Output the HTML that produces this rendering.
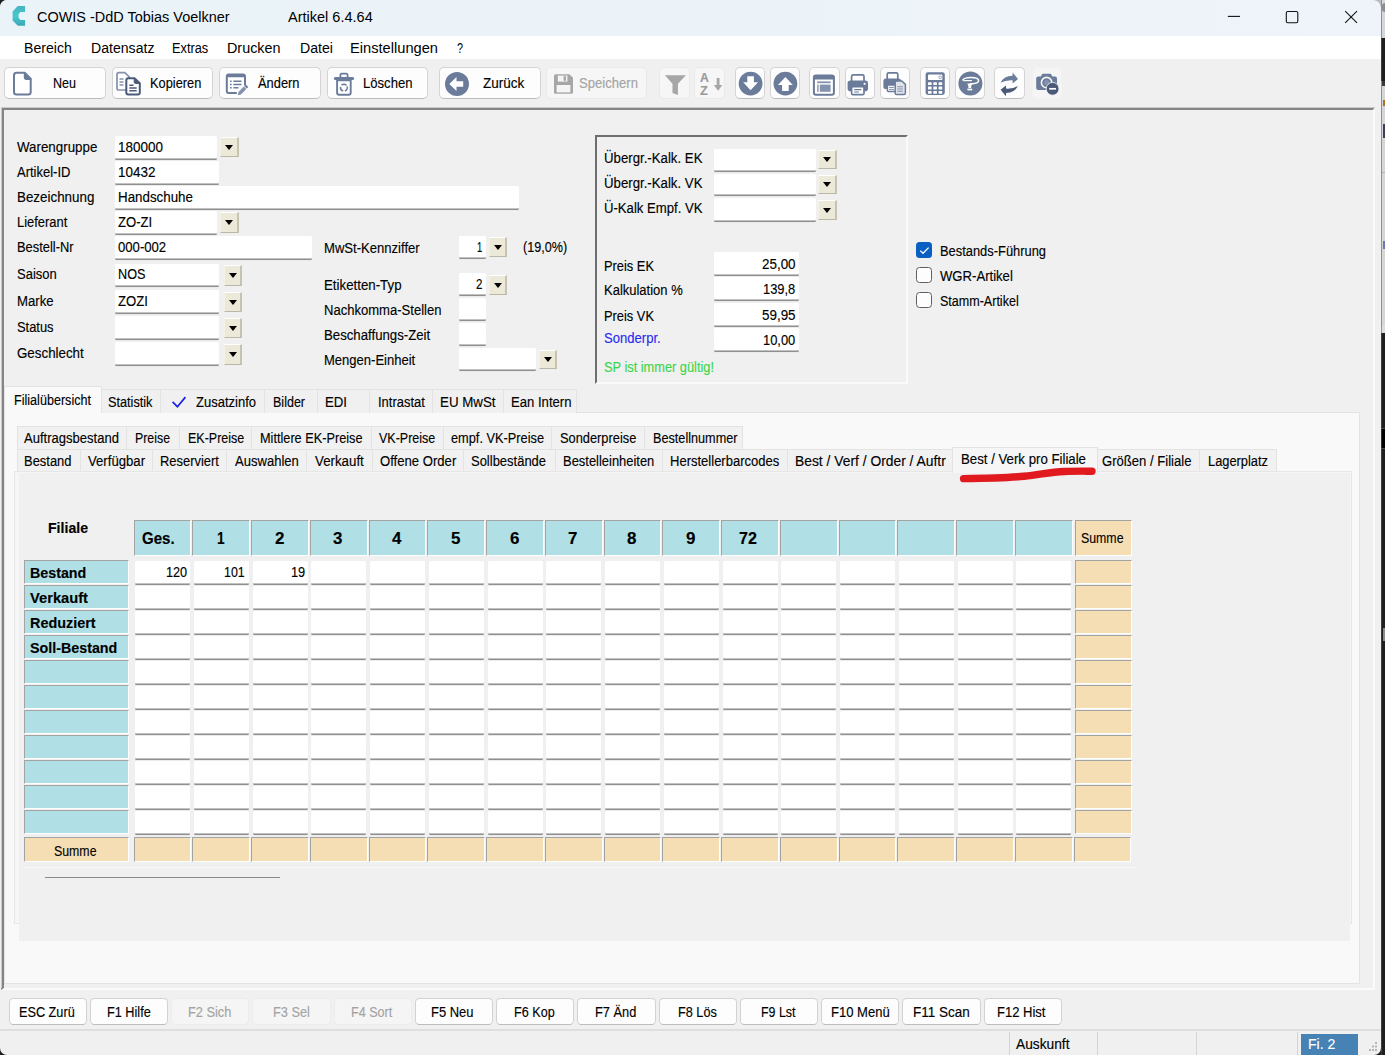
<!DOCTYPE html>
<html lang="de"><head><meta charset="utf-8"><title>COWIS - Artikel</title>
<style>
html,body{margin:0;padding:0}
body{width:1385px;height:1055px;position:relative;overflow:hidden;background:#1f1f1f;font-family:"Liberation Sans",sans-serif;color:#000}
body>div,.a{position:absolute;box-sizing:content-box}
.t{position:absolute;white-space:nowrap;line-height:1;transform-origin:0 0;display:block;-webkit-text-stroke:.15px currentColor}
.in{background:#fff;border-bottom:1px solid #8f8f8f;border-radius:1.500px;box-sizing:border-box !important;box-shadow:inset 0 -1px 0 #c2c2c2,0 1px 0 #ebebeb}
.dd{background:#ece9d8;border-top:1px solid #fff;border-left:1px solid #f4f2e8;border-right:2px solid #c6c3b2;border-bottom:1px solid #bab7a6;box-sizing:border-box !important}
.dd i{position:absolute;left:50%;top:50%;margin:-2.200px 0 0 -3.900px;width:0;height:0;border-left:4.700px solid transparent;border-right:4.700px solid transparent;border-top:5.600px solid #000}
.hc{border-top:1px solid #a3a3a3;border-left:1px solid #a3a3a3;border-right:1.500px solid #fff;border-bottom:1.500px solid #fff;box-sizing:border-box !important}
.b{box-sizing:content-box}
</style></head>
<body>
<div style="left:1381px;top:0px;width:4px;height:1055px;background:#1f1f1f"></div>
<div style="left:1381px;top:0px;width:4px;height:38px;background:#d4d6d8"></div>
<div style="left:1382px;top:3px;width:3px;height:9px;background:#8e8e8e;border-radius:3px 0 0 3px"></div>
<div style="left:1381px;top:80.5px;width:4px;height:244.5px;background:#d6d6d6"></div>
<div style="left:1381px;top:171.5px;width:4px;height:1px;background:#b4b4b4"></div>
<div style="left:1383px;top:241px;width:2px;height:8px;background:#6a78b0"></div>
<div style="left:1382px;top:81px;width:3px;height:5px;background:#3a3a3a"></div>
<div style="left:1382.5px;top:100px;width:2.5px;height:6px;background:#b0702a"></div>
<div style="left:1382.5px;top:124px;width:2.5px;height:14px;background:#3d3d58"></div>
<div style="left:1381px;top:325px;width:4px;height:8px;background:#dddddd"></div>
<div style="left:1381px;top:428px;width:4px;height:21px;background:#4a4a4a"></div>
<div style="left:1381px;top:429px;width:4px;height:19px;background:#000"></div>
<div style="left:1383px;top:628px;width:2px;height:13px;background:#8c8c8c"></div>
<div style="left:1381px;top:0px;width:1px;height:1055px;background:rgba(90,90,90,.55)"></div>
<div class="win" style="left:0px;top:0px;width:1381px;height:1055px;background:#f0f0f0;border-radius:7px;overflow:hidden"></div>
<div style="left:0px;top:0px;width:1381px;height:36px;background:linear-gradient(90deg,#eaf3f7,#ecf3f8 55%,#eff3fa);border-radius:7px 7px 0 0"></div>
<svg class="a" style="left:10px;top:4px" width="18" height="24" viewBox="10 4 18 24"><defs><linearGradient id="cg" x1="0" y1="0" x2="0" y2="1"><stop offset="0" stop-color="#48b3be"/><stop offset=".5" stop-color="#46c9d1"/><stop offset="1" stop-color="#3ba7b3"/></linearGradient></defs><path d="M17.800 6.100H25.100V11.900H20.600L18.600 14V17.900L20.600 19.900H25.100V25.800H17.800L12.600 20.500V11.500Z" fill="url(#cg)"/></svg>
<span class="t" style="left:37.40px;top:9.00px;font-size:15.5px;transform:scaleX(0.9329);-webkit-text-stroke:0;">COWIS -DdD Tobias Voelkner</span>
<span class="t" style="left:288.30px;top:9.00px;font-size:15.5px;transform:scaleX(0.9365);-webkit-text-stroke:0;">Artikel 6.4.64</span>
<svg class="a" style="left:1220px;top:5px" width="150" height="26" viewBox="0 0 150 26"><g stroke="#111" stroke-width="1.1" fill="none"><path d="M7.8 11.4H20"/><rect x="66.3" y="6.5" width="11.5" height="11.2" rx="1.5"/><path d="M125.2 6.2L137 17.8M137 6.2L125.2 17.8"/></g></svg>
<div style="left:0px;top:36px;width:1381px;height:22.6px;background:#fff"></div>
<span class="t" style="left:24.20px;top:40.00px;font-size:15.5px;transform:scaleX(0.9097);-webkit-text-stroke:0;">Bereich</span>
<span class="t" style="left:90.50px;top:40.00px;font-size:15.5px;transform:scaleX(0.9094);-webkit-text-stroke:0;">Datensatz</span>
<span class="t" style="left:172.00px;top:40.00px;font-size:15.5px;transform:scaleX(0.8238);-webkit-text-stroke:0;">Extras</span>
<span class="t" style="left:227.00px;top:40.00px;font-size:15.5px;transform:scaleX(0.9266);-webkit-text-stroke:0;">Drucken</span>
<span class="t" style="left:299.50px;top:40.00px;font-size:15.5px;transform:scaleX(0.9118);-webkit-text-stroke:0;">Datei</span>
<span class="t" style="left:350.00px;top:40.00px;font-size:15.5px;transform:scaleX(0.9454);-webkit-text-stroke:0;">Einstellungen</span>
<span class="t" style="left:456.50px;top:40.00px;font-size:15.5px;transform:scaleX(0.6975);-webkit-text-stroke:0;">?</span>
<div class="b" style="left:4px;top:67px;width:99.5px;height:30px;background:#fdfdfd;border:1px solid #d4d4d4;border-bottom-color:#bcbcbc;border-radius:5px"></div>
<div class="b" style="left:111.6px;top:67px;width:99.4px;height:30px;background:#fdfdfd;border:1px solid #d4d4d4;border-bottom-color:#bcbcbc;border-radius:5px"></div>
<div class="b" style="left:219.2px;top:67px;width:99.5px;height:30px;background:#fdfdfd;border:1px solid #d4d4d4;border-bottom-color:#bcbcbc;border-radius:5px"></div>
<div class="b" style="left:326.8px;top:67px;width:99.3px;height:30px;background:#fdfdfd;border:1px solid #d4d4d4;border-bottom-color:#bcbcbc;border-radius:5px"></div>
<div class="b" style="left:439px;top:67px;width:99.6px;height:30px;background:#fdfdfd;border:1px solid #d4d4d4;border-bottom-color:#bcbcbc;border-radius:5px"></div>
<div class="b" style="left:545.6px;top:67px;width:99px;height:30px;background:#f6f6f6;border:1px solid #eaeaea;border-radius:5px"></div>
<span class="t" style="left:53.00px;top:75.00px;font-size:15.5px;transform:scaleX(0.8086);">Neu</span>
<span class="t" style="left:150.00px;top:75.00px;font-size:15.5px;transform:scaleX(0.8264);">Kopieren</span>
<span class="t" style="left:257.50px;top:75.00px;font-size:15.5px;transform:scaleX(0.8302);">Ändern</span>
<span class="t" style="left:363.00px;top:75.00px;font-size:15.5px;transform:scaleX(0.8449);">Löschen</span>
<span class="t" style="left:482.50px;top:75.00px;font-size:15.5px;transform:scaleX(0.8708);">Zurück</span>
<span class="t" style="left:579.00px;top:75.00px;font-size:15.5px;transform:scaleX(0.8449);color:#a3a3a3;">Speichern</span>
<div class="b" style="left:659.3px;top:67px;width:29.2px;height:30px;background:#f6f6f6;border:1px solid #eaeaea;border-radius:5px"></div>
<div class="b" style="left:694.3px;top:67px;width:29.2px;height:30px;background:#f6f6f6;border:1px solid #eaeaea;border-radius:5px"></div>
<div class="b" style="left:734.6px;top:67px;width:28.7px;height:30px;background:#fdfdfd;border:1px solid #d4d4d4;border-bottom-color:#bcbcbc;border-radius:5px"></div>
<div class="b" style="left:769.6px;top:67px;width:28.7px;height:30px;background:#fdfdfd;border:1px solid #d4d4d4;border-bottom-color:#bcbcbc;border-radius:5px"></div>
<div class="b" style="left:809.3px;top:67px;width:28.7px;height:30px;background:#fdfdfd;border:1px solid #d4d4d4;border-bottom-color:#bcbcbc;border-radius:5px"></div>
<div class="b" style="left:844.5px;top:67px;width:28.7px;height:30px;background:#fdfdfd;border:1px solid #d4d4d4;border-bottom-color:#bcbcbc;border-radius:5px"></div>
<div class="b" style="left:879.6px;top:67px;width:28.7px;height:30px;background:#fdfdfd;border:1px solid #d4d4d4;border-bottom-color:#bcbcbc;border-radius:5px"></div>
<div class="b" style="left:919.5px;top:67px;width:28.7px;height:30px;background:#fdfdfd;border:1px solid #d4d4d4;border-bottom-color:#bcbcbc;border-radius:5px"></div>
<div class="b" style="left:954.6px;top:67px;width:28.7px;height:30px;background:#fdfdfd;border:1px solid #d4d4d4;border-bottom-color:#bcbcbc;border-radius:5px"></div>
<div class="b" style="left:994.4px;top:67px;width:28.7px;height:30px;background:#fdfdfd;border:1px solid #d4d4d4;border-bottom-color:#bcbcbc;border-radius:5px"></div>
<div class="b" style="left:1032.3px;top:67px;width:28px;height:30px;background:#f5f5f5;border:1px solid #f2f2f2;border-radius:5px"></div>
<span class="t" style="left:699.60px;top:72.00px;font-size:12.8px;transform:scaleX(0.9549);font-weight:700;color:#999;">A</span>
<span class="t" style="left:700.00px;top:85.00px;font-size:12.8px;transform:scaleX(0.9990);font-weight:700;color:#999;">Z</span>
<svg class="a" style="left:0;top:60px" width="1381" height="45" viewBox="0 60 1381 45"><path d="M16.5 72.8h8.2l6 6v13.2q0 2.5-2.5 2.5h-11.7q-2.5 0-2.5-2.5v-16.7q0-2.5 2.5-2.5z" fill="#fff" stroke="#6b7b9a" stroke-width="2" stroke-linejoin="round"/><path d="M24.400 72.800v4.500q0 2 2 2h4.500z" fill="#6b7b9a" stroke="#6b7b9a" stroke-width="1.200" stroke-linejoin="round"/><path d="M118.8 72.6h6l4.6 4.4v11.2q0 1.8-1.8 1.8h-8.8q-1.8 0-1.8-1.8v-13.8q0-1.8 1.8-1.8z" fill="#fff" stroke="#8492ae" stroke-width="1.7"/><path d="M119.5 79h4M119.5 82h4M119.5 85h4" stroke="#8492ae" stroke-width="1.3"/><path d="M128.3 78.2h6.2l5.3 5v9.2q0 2-2 2h-9.5q-2 0-2-2v-12.2q0-2 2-2z" fill="#fff" stroke="#4c5a7a" stroke-width="2"/><path d="M134.200 78.400v3.600q0 1.500 1.500 1.500h4.200z" fill="#4c5a7a" stroke="#4c5a7a" stroke-width="1" stroke-linejoin="round"/><path d="M129.3 85.2h4.2M129.3 88h7.4M129.3 90.8h7.4" stroke="#4c5a7a" stroke-width="1.5"/><path d="M245 85.500v-9q0-2-2-2h-14.200q-2 0-2 2v14.400q0 2 2 2h8" fill="none" stroke="#6b7b9a" stroke-width="2"/><rect x="226.800" y="74" width="18.200" height="3.200" rx="1.200" fill="#6b7b9a"/><path d="M230 81.300h1.600M233.400 81.300h8M230 84.500h1.600M233.400 84.500h8M230 87.700h1.600M233.400 87.700h5" stroke="#6b7b9a" stroke-width="1.500"/><path d="M237.600 95.300l.9-3.400 5.300-5.300 2.500 2.500-5.300 5.300z" fill="#8492ae"/><path d="M244.300 86.100l.9-.9q.7-.6 1.400 0l1.100 1.100q.6.700 0 1.400l-.9.900z" fill="#6b7b9a"/><path d="M337.100 80.200h13.600v12.600q0 2-2 2h-9.600q-2 0-2-2z" fill="#fff" stroke="#6b7b9a" stroke-width="1.900"/><path d="M335.400 78.600h17.200" stroke="#6b7b9a" stroke-width="3" stroke-linecap="round"/><path d="M340.400 77.500v-2.400q0-1.500 1.500-1.500h4.200q1.500 0 1.500 1.500v2.400" fill="none" stroke="#6b7b9a" stroke-width="1.800"/><circle cx="343.900" cy="87.700" r="3.400" fill="none" stroke="#6b7b9a" stroke-width="1.600" stroke-dasharray="5.300 1.820" transform="rotate(-20 343.900 87.700)"/><circle cx="457" cy="84" r="12" fill="#6b7b9a"/><path d="M449.3 84l7.2-7v4.3h6.7v5.4h-6.7v4.3z" fill="#fff"/><path d="M555.6 74.2h13.8l3.6 3.6v14.4q0 1.6-1.6 1.6h-15.8q-1.6 0-1.6-1.6v-16.4q0-1.6 1.6-1.6z" fill="#a6a6a6"/><rect x="557.8" y="75.6" width="9.6" height="6" fill="#f4f4f4"/><rect x="563.6" y="76.2" width="2.4" height="4.6" fill="#a6a6a6"/><rect x="556.6" y="85" width="13.8" height="7.4" fill="#f4f4f4"/><path d="M664.9 75.2h21l-8 8.6v11.2l-5.4-2v-9.2z" fill="#a6a6a6"/><path d="M716.700 78h2.800v7h2.900l-4.300 5.800-4.300-5.800h2.900z" fill="#a6a6a6"/><circle cx="750.6" cy="83.6" r="11.9" fill="#6b7b9a"/><path d="M747.3 76.2h6.6v6h4.1l-7.4 8-7.4-8h4.1z" fill="#fff"/><circle cx="785.4" cy="83.6" r="11.9" fill="#6b7b9a"/><path d="M782.1 91h6.6v-6h4.1l-7.4-8-7.4 8h4.1z" fill="#fff"/><rect x="813.9" y="75.6" width="20" height="19.2" rx="2" fill="#fff" stroke="#6b7b9a" stroke-width="2"/><rect x="813.5" y="75" width="20.8" height="4.6" rx="1.5" fill="#6b7b9a"/><rect x="817.2" y="81.4" width="13.4" height="1.8" fill="#8492ae"/><rect x="817.2" y="84.6" width="1.4" height="7.2" fill="#8492ae"/><rect x="819.8" y="84.6" width="10.8" height="7.2" fill="#8492ae"/><path d="M851.6 80.9v-4.4q0-1.6 1.6-1.6h9.2q1.6 0 1.6 1.6v4.4" fill="#fff" stroke="#6b7b9a" stroke-width="1.7"/><rect x="847.6" y="80.4" width="20.4" height="10.8" rx="2.8" fill="#6b7b9a"/><circle cx="864.6" cy="83.80000000000001" r="1.1" fill="#fff"/><rect x="851.6" y="86.60000000000001" width="12.4" height="8" rx="1.4" fill="#fff" stroke="#6b7b9a" stroke-width="1.7"/><path d="M854.2 89.60000000000001h7.2M854.2 92.0h4.6" stroke="#6b7b9a" stroke-width="1.2"/><path d="M887.2 79v-4.6q0-1.5 1.5-1.5h7.6q1.5 0 1.5 1.5v4.6" fill="#fff" stroke="#6b7b9a" stroke-width="1.7"/><rect x="883.4" y="78.4" width="17.6" height="10.6" rx="2.6" fill="#6b7b9a"/><rect x="887.4" y="85" width="9" height="6.6" rx="1" fill="#fff" stroke="#6b7b9a" stroke-width="1.5"/><path d="M889 87.4h5M889 89.4h5" stroke="#8492ae" stroke-width="1"/><path d="M896.6 81h5.2l3.6 3.4v8.8q0 1.4-1.4 1.4h-7.4q-1.4 0-1.4-1.4v-10.800q0-1.4 1.4-1.400z" fill="#dfe3ea" stroke="#6b7b9a" stroke-width="1.5"/><path d="M897.3 86.800h5.600M897.3 89h5.600M897.3 91.200h5.600" stroke="#8492ae" stroke-width="1.1"/><rect x="925.6" y="72.2" width="19.2" height="22.8" rx="2.4" fill="#6b7b9a"/><rect x="928" y="74.6" width="14.4" height="5.4" rx=".8" fill="#fff"/><circle cx="940.2" cy="77.3" r="1.4" fill="none" stroke="#8492ae" stroke-width=".8"/><rect x="928.0" y="82.3" width="3.6" height="2.8" rx=".5" fill="#fff"/><rect x="933.3" y="82.3" width="3.6" height="2.8" rx=".5" fill="#fff"/><rect x="938.6" y="82.3" width="3.6" height="2.8" rx=".5" fill="#fff"/><rect x="928.0" y="86.6" width="3.6" height="2.8" rx=".5" fill="#fff"/><rect x="933.3" y="86.6" width="3.6" height="2.8" rx=".5" fill="#fff"/><rect x="938.6" y="86.6" width="3.6" height="2.8" rx=".5" fill="#fff"/><rect x="928.0" y="90.9" width="3.6" height="2.8" rx=".5" fill="#fff"/><rect x="933.3" y="90.9" width="3.6" height="2.8" rx=".5" fill="#fff"/><rect x="938.6" y="90.9" width="3.6" height="2.8" rx=".5" fill="#fff"/><circle cx="970.4" cy="83.600" r="12" fill="#6b7b9a"/><path d="M962.600 80.400q1-3 8.400-3 7.600 0 7.600 3.200 0 2.900-6.200 3.100l-2.300.1" fill="none" stroke="#fff" stroke-width="1.500"/><path d="M963.400 80.600h8.600" stroke="#fff" stroke-width="1.200"/><path d="M967.300 83.400h5l-1.100 2.600v2h-2.800v-2z" fill="#fff"/><rect x="967.400" y="88.600" width="4.800" height="1.800" fill="#fff"/><path d="M1000.600 82.800Q1003.600 76 1012.600 75.800L1012.600 72.600L1018 79L1012.600 83.400L1012.600 80.200Q1005.500 79.800 1000.600 82.800Z" fill="#6b7b9a"/><path d="M1017.800 86Q1014.800 92.800 1006 93L1006 96.200L1000.600 89.800L1006 85.400L1006 88.600Q1013.100 89 1017.800 86Z" fill="#4c5a7a"/><path d="M1036.200 78.400q0-2 2-2h2.600l1.600-2.600h8.400l1.600 2.600h2.600q2 0 2 2v9.600q0 2-2 2h-16.800q-2 0-2-2z" fill="#6b7b9a"/><circle cx="1046.600" cy="82.600" r="5.200" fill="none" stroke="#f5f5f5" stroke-width="1.600"/><circle cx="1046.600" cy="82.600" r="2.600" fill="#8492ae"/><circle cx="1052.600" cy="88.800" r="6.400" fill="#4c5a7a" stroke="#f5f5f5" stroke-width=".8"/><path d="M1049.200 88.800h6.800" stroke="#fff" stroke-width="1.700"/></svg>
<div style="left:1px;top:107px;width:1374px;height:883px;border-top:3px solid #858585;border-left:3px solid #858585;border-right:2px solid #fbfbfb;border-bottom:2px solid #fbfbfb;box-sizing:border-box"></div>
<div style="left:1px;top:107px;width:1374px;height:1px;background:#c9c9c9"></div>
<div style="left:1px;top:108px;width:1px;height:880px;background:#c9c9c9"></div>
<span class="t" style="left:17.20px;top:139.00px;font-size:15.5px;transform:scaleX(0.8606);">Warengruppe</span>
<span class="t" style="left:17.20px;top:164.00px;font-size:15.5px;transform:scaleX(0.8382);">Artikel-ID</span>
<span class="t" style="left:17.20px;top:189.00px;font-size:15.5px;transform:scaleX(0.8628);">Bezeichnung</span>
<span class="t" style="left:17.20px;top:214.00px;font-size:15.5px;transform:scaleX(0.8342);">Lieferant</span>
<span class="t" style="left:17.20px;top:239.00px;font-size:15.5px;transform:scaleX(0.8311);">Bestell-Nr</span>
<span class="t" style="left:17.20px;top:266.00px;font-size:15.5px;transform:scaleX(0.8391);">Saison</span>
<span class="t" style="left:17.20px;top:293.00px;font-size:15.5px;transform:scaleX(0.8482);">Marke</span>
<span class="t" style="left:17.20px;top:319.00px;font-size:15.5px;transform:scaleX(0.8318);">Status</span>
<span class="t" style="left:17.00px;top:345.00px;font-size:15.5px;transform:scaleX(0.8604);">Geschlecht</span>
<div class="in" style="left:115px;top:135.6px;width:102px;height:24px;"></div>
<div class="dd" style="left:220px;top:136.5px;width:18.8px;height:20.5px;"><i></i></div>
<div class="in" style="left:115px;top:161px;width:103.5px;height:23.6px;"></div>
<div class="in" style="left:115px;top:186px;width:403.8px;height:23.6px;"></div>
<div class="in" style="left:115px;top:211px;width:102px;height:23.6px;"></div>
<div class="dd" style="left:220px;top:212px;width:18.8px;height:20.5px;"><i></i></div>
<div class="in" style="left:115px;top:236px;width:197px;height:23.6px;"></div>
<div class="in" style="left:115px;top:264px;width:103.5px;height:23.4px;"></div>
<div class="dd" style="left:223.8px;top:265.3px;width:18.4px;height:20.4px;"><i></i></div>
<div class="in" style="left:115px;top:290px;width:103.5px;height:23.5px;"></div>
<div class="dd" style="left:223.8px;top:291.7px;width:18.4px;height:20.3px;"><i></i></div>
<div class="in" style="left:115px;top:316px;width:103.5px;height:23.6px;"></div>
<div class="dd" style="left:223.8px;top:318px;width:18.4px;height:20.2px;"><i></i></div>
<div class="in" style="left:115px;top:342.4px;width:103.5px;height:23.3px;"></div>
<div class="dd" style="left:223.8px;top:344.4px;width:18.4px;height:20.2px;"><i></i></div>
<span class="t" style="left:117.60px;top:139.00px;font-size:15.5px;transform:scaleX(0.8686);">180000</span>
<span class="t" style="left:117.60px;top:164.00px;font-size:15.5px;transform:scaleX(0.8680);">10432</span>
<span class="t" style="left:117.60px;top:189.00px;font-size:15.5px;transform:scaleX(0.8606);">Handschuhe</span>
<span class="t" style="left:117.60px;top:214.00px;font-size:15.5px;transform:scaleX(0.8441);">ZO-ZI</span>
<span class="t" style="left:117.60px;top:239.00px;font-size:15.5px;transform:scaleX(0.8464);">000-002</span>
<span class="t" style="left:117.60px;top:266.00px;font-size:15.5px;transform:scaleX(0.8165);">NOS</span>
<span class="t" style="left:117.60px;top:293.00px;font-size:15.5px;transform:scaleX(0.8479);">ZOZI</span>
<span class="t" style="left:323.80px;top:240.00px;font-size:15.5px;transform:scaleX(0.8435);">MwSt-Kennziffer</span>
<span class="t" style="left:323.80px;top:277.00px;font-size:15.5px;transform:scaleX(0.8569);">Etiketten-Typ</span>
<span class="t" style="left:323.80px;top:302.00px;font-size:15.5px;transform:scaleX(0.8418);">Nachkomma-Stellen</span>
<span class="t" style="left:323.80px;top:327.00px;font-size:15.5px;transform:scaleX(0.8522);">Beschaffungs-Zeit</span>
<span class="t" style="left:323.80px;top:352.00px;font-size:15.5px;transform:scaleX(0.8400);">Mengen-Einheit</span>
<div class="in" style="left:458.8px;top:235.5px;width:27px;height:23.9px;"></div>
<div class="dd" style="left:488.8px;top:237px;width:18.2px;height:20px;"><i></i></div>
<span class="t" style="left:477.40px;top:239.00px;font-size:15.5px;transform:scaleX(0.6045);">1</span>
<span class="t" style="left:523.40px;top:239.00px;font-size:15.5px;transform:scaleX(0.8129);">(19,0%)</span>
<div class="in" style="left:458.8px;top:273px;width:27px;height:23px;"></div>
<div class="dd" style="left:488.8px;top:275px;width:18.2px;height:19.5px;"><i></i></div>
<span class="t" style="left:476.40px;top:276.00px;font-size:15.5px;transform:scaleX(0.7440);">2</span>
<div class="in" style="left:458.8px;top:297.6px;width:27px;height:23.6px;"></div>
<div class="in" style="left:458.8px;top:322.6px;width:27px;height:23.8px;"></div>
<div class="in" style="left:458.8px;top:347.6px;width:77px;height:23.8px;"></div>
<div class="dd" style="left:538.8px;top:349.5px;width:18.2px;height:19.5px;"><i></i></div>
<div style="left:595.4px;top:135px;width:313px;height:249px;border-top:2.500px solid #6e6e6e;border-left:2.500px solid #6e6e6e;border-right:2px solid #fafafa;border-bottom:2px solid #fafafa;box-sizing:border-box"></div>
<span class="t" style="left:603.80px;top:150.00px;font-size:15.5px;transform:scaleX(0.8530);">Übergr.-Kalk. EK</span>
<span class="t" style="left:603.80px;top:175.00px;font-size:15.5px;transform:scaleX(0.8530);">Übergr.-Kalk. VK</span>
<span class="t" style="left:603.80px;top:200.00px;font-size:15.5px;transform:scaleX(0.8473);">Ü-Kalk Empf. VK</span>
<div class="in" style="left:713.8px;top:148.6px;width:102px;height:23.4px;"></div>
<div class="dd" style="left:818.3px;top:150px;width:18.7px;height:19px;"><i></i></div>
<div class="in" style="left:713.8px;top:173.6px;width:102px;height:22.8px;"></div>
<div class="dd" style="left:818.3px;top:175px;width:18.7px;height:19.3px;"><i></i></div>
<div class="in" style="left:713.8px;top:198.4px;width:102px;height:23.2px;"></div>
<div class="dd" style="left:818.3px;top:200px;width:18.7px;height:19.6px;"><i></i></div>
<span class="t" style="left:603.80px;top:258.00px;font-size:15.5px;transform:scaleX(0.8293);">Preis EK</span>
<span class="t" style="left:603.80px;top:282.00px;font-size:15.5px;transform:scaleX(0.8379);">Kalkulation %</span>
<span class="t" style="left:603.80px;top:308.00px;font-size:15.5px;transform:scaleX(0.8293);">Preis VK</span>
<span class="t" style="left:603.80px;top:330.00px;font-size:15.5px;transform:scaleX(0.8438);color:#2a2af0;">Sonderpr.</span>
<span class="t" style="left:603.80px;top:359.00px;font-size:15.5px;transform:scaleX(0.8257);color:#3bd64a;">SP ist immer gültig!</span>
<div class="in" style="left:713.8px;top:251.8px;width:85px;height:23.8px;"></div>
<div class="in" style="left:713.8px;top:277.4px;width:85px;height:24px;"></div>
<div class="in" style="left:713.8px;top:302.6px;width:85px;height:24.2px;"></div>
<div class="in" style="left:713.8px;top:328px;width:85px;height:24px;"></div>
<span class="t" style="left:762.00px;top:256.00px;font-size:15.5px;transform:scaleX(0.8654);">25,00</span>
<span class="t" style="left:763.30px;top:281.00px;font-size:15.5px;transform:scaleX(0.8319);">139,8</span>
<span class="t" style="left:762.00px;top:307.00px;font-size:15.5px;transform:scaleX(0.8654);">59,95</span>
<span class="t" style="left:763.30px;top:332.00px;font-size:15.5px;transform:scaleX(0.8319);">10,00</span>
<div style="left:916px;top:242px;width:16.4px;height:16.4px;background:#0b5fc2;border-radius:3.500px"></div>
<svg class="a" style="left:916px;top:242px" width="17" height="17" viewBox="0 0 17 17"><path d="M4.300 8.600l2.700 2.700 5.600-5.700" fill="none" stroke="#fff" stroke-width="1.300"/></svg>
<div style="left:916px;top:267px;width:16.4px;height:16.4px;background:#fdfdfd;border:1.500px solid #5f5f5f;border-radius:3.500px;box-sizing:border-box"></div>
<div style="left:916px;top:292px;width:16.4px;height:16.4px;background:#fdfdfd;border:1.500px solid #5f5f5f;border-radius:3.500px;box-sizing:border-box"></div>
<span class="t" style="left:940.00px;top:243.00px;font-size:15.5px;transform:scaleX(0.8315);">Bestands-Führung</span>
<span class="t" style="left:940.00px;top:268.00px;font-size:15.5px;transform:scaleX(0.8455);">WGR-Artikel</span>
<span class="t" style="left:940.00px;top:293.00px;font-size:15.5px;transform:scaleX(0.8085);">Stamm-Artikel</span>
<div style="left:4px;top:412.4px;width:1356px;height:571.6px;background:#f9f9f9;border:1px solid #e3e3e3;box-sizing:border-box"></div>
<div style="left:101.3px;top:389px;width:59.7px;height:24px;border:1px solid #e3e3e3;border-bottom:none;box-sizing:border-box;background:#f0f0f0"></div>
<span class="t" style="left:107.50px;top:394.00px;font-size:15.5px;transform:scaleX(0.8191);">Statistik</span>
<div style="left:160px;top:389px;width:105.3px;height:24px;border:1px solid #e3e3e3;border-bottom:none;box-sizing:border-box;background:#f0f0f0"></div>
<span class="t" style="left:196.30px;top:394.00px;font-size:15.5px;transform:scaleX(0.8388);">Zusatzinfo</span>
<div style="left:264.3px;top:389px;width:53.7px;height:24px;border:1px solid #e3e3e3;border-bottom:none;box-sizing:border-box;background:#f0f0f0"></div>
<span class="t" style="left:272.50px;top:394.00px;font-size:15.5px;transform:scaleX(0.8080);">Bilder</span>
<div style="left:317px;top:389px;width:53.3px;height:24px;border:1px solid #e3e3e3;border-bottom:none;box-sizing:border-box;background:#f0f0f0"></div>
<span class="t" style="left:325.00px;top:394.00px;font-size:15.5px;transform:scaleX(0.8525);">EDI</span>
<div style="left:369.3px;top:389px;width:63.5px;height:24px;border:1px solid #e3e3e3;border-bottom:none;box-sizing:border-box;background:#f0f0f0"></div>
<span class="t" style="left:377.50px;top:394.00px;font-size:15.5px;transform:scaleX(0.8352);">Intrastat</span>
<div style="left:431.8px;top:389px;width:72.2px;height:24px;border:1px solid #e3e3e3;border-bottom:none;box-sizing:border-box;background:#f0f0f0"></div>
<span class="t" style="left:440.00px;top:394.00px;font-size:15.5px;transform:scaleX(0.8597);">EU MwSt</span>
<div style="left:503px;top:389px;width:74.3px;height:24px;border:1px solid #e3e3e3;border-bottom:none;box-sizing:border-box;background:#f0f0f0"></div>
<span class="t" style="left:511.30px;top:394.00px;font-size:15.5px;transform:scaleX(0.8458);">Ean Intern</span>
<svg class="a" style="left:170px;top:392px" width="18" height="16" viewBox="0 0 18 16"><path d="M2.600 9.800l4.800 4.900 8-9.600" fill="none" stroke="#1a22e8" stroke-width="1.700"/></svg>
<div style="left:4px;top:386px;width:97.6px;height:27.4px;background:#f9f9f9;border:1px solid #e3e3e3;border-bottom:none;box-sizing:border-box"></div>
<span class="t" style="left:14.30px;top:392.00px;font-size:15.5px;transform:scaleX(0.8124);">Filialübersicht</span>
<div style="left:17px;top:426.2px;width:110.3px;height:22.8px;border:1px solid #e3e3e3;border-bottom:none;box-sizing:border-box;background:#f1f1f1"></div>
<span class="t" style="left:23.80px;top:430.00px;font-size:15.5px;transform:scaleX(0.8413);">Auftragsbestand</span>
<div style="left:126.3px;top:426.2px;width:53.5px;height:22.8px;border:1px solid #e3e3e3;border-bottom:none;box-sizing:border-box;background:#f1f1f1"></div>
<span class="t" style="left:135.00px;top:430.00px;font-size:15.5px;transform:scaleX(0.7965);">Preise</span>
<div style="left:178.8px;top:426.2px;width:73.5px;height:22.8px;border:1px solid #e3e3e3;border-bottom:none;box-sizing:border-box;background:#f1f1f1"></div>
<span class="t" style="left:187.50px;top:430.00px;font-size:15.5px;transform:scaleX(0.8072);">EK-Preise</span>
<div style="left:251.3px;top:426.2px;width:120.5px;height:22.8px;border:1px solid #e3e3e3;border-bottom:none;box-sizing:border-box;background:#f1f1f1"></div>
<span class="t" style="left:260.00px;top:430.00px;font-size:15.5px;transform:scaleX(0.8205);">Mittlere EK-Preise</span>
<div style="left:370.8px;top:426.2px;width:73.2px;height:22.8px;border:1px solid #e3e3e3;border-bottom:none;box-sizing:border-box;background:#f1f1f1"></div>
<span class="t" style="left:378.80px;top:430.00px;font-size:15.5px;transform:scaleX(0.8057);">VK-Preise</span>
<div style="left:443px;top:426.2px;width:109.3px;height:22.8px;border:1px solid #e3e3e3;border-bottom:none;box-sizing:border-box;background:#f1f1f1"></div>
<span class="t" style="left:450.80px;top:430.00px;font-size:15.5px;transform:scaleX(0.8242);">empf. VK-Preise</span>
<div style="left:551.3px;top:426.2px;width:93.5px;height:22.8px;border:1px solid #e3e3e3;border-bottom:none;box-sizing:border-box;background:#f1f1f1"></div>
<span class="t" style="left:560.00px;top:430.00px;font-size:15.5px;transform:scaleX(0.8273);">Sonderpreise</span>
<div style="left:643.8px;top:426.2px;width:99px;height:22.8px;border:1px solid #e3e3e3;border-bottom:none;box-sizing:border-box;background:#f1f1f1"></div>
<span class="t" style="left:652.50px;top:430.00px;font-size:15.5px;transform:scaleX(0.8173);">Bestellnummer</span>
<div style="left:17px;top:449.2px;width:63.5px;height:22px;border:1px solid #e3e3e3;border-bottom:none;box-sizing:border-box;background:#f1f1f1"></div>
<span class="t" style="left:23.80px;top:453.00px;font-size:15.5px;transform:scaleX(0.8350);">Bestand</span>
<div style="left:79.5px;top:449.2px;width:73.3px;height:22px;border:1px solid #e3e3e3;border-bottom:none;box-sizing:border-box;background:#f1f1f1"></div>
<span class="t" style="left:87.50px;top:453.00px;font-size:15.5px;transform:scaleX(0.8483);">Verfügbar</span>
<div style="left:151.8px;top:449.2px;width:75.5px;height:22px;border:1px solid #e3e3e3;border-bottom:none;box-sizing:border-box;background:#f1f1f1"></div>
<span class="t" style="left:160.00px;top:453.00px;font-size:15.5px;transform:scaleX(0.8328);">Reserviert</span>
<div style="left:226.3px;top:449.2px;width:81px;height:22px;border:1px solid #e3e3e3;border-bottom:none;box-sizing:border-box;background:#f1f1f1"></div>
<span class="t" style="left:235.00px;top:453.00px;font-size:15.5px;transform:scaleX(0.8417);">Auswahlen</span>
<div style="left:306.3px;top:449.2px;width:66.5px;height:22px;border:1px solid #e3e3e3;border-bottom:none;box-sizing:border-box;background:#f1f1f1"></div>
<span class="t" style="left:315.00px;top:453.00px;font-size:15.5px;transform:scaleX(0.8579);">Verkauft</span>
<div style="left:371.8px;top:449.2px;width:92.2px;height:22px;border:1px solid #e3e3e3;border-bottom:none;box-sizing:border-box;background:#f1f1f1"></div>
<span class="t" style="left:379.50px;top:453.00px;font-size:15.5px;transform:scaleX(0.8458);">Offene Order</span>
<div style="left:463px;top:449.2px;width:92.5px;height:22px;border:1px solid #e3e3e3;border-bottom:none;box-sizing:border-box;background:#f1f1f1"></div>
<span class="t" style="left:471.30px;top:453.00px;font-size:15.5px;transform:scaleX(0.8371);">Sollbestände</span>
<div style="left:554.5px;top:449.2px;width:108.3px;height:22px;border:1px solid #e3e3e3;border-bottom:none;box-sizing:border-box;background:#f1f1f1"></div>
<span class="t" style="left:562.50px;top:453.00px;font-size:15.5px;transform:scaleX(0.8343);">Bestelleinheiten</span>
<div style="left:661.8px;top:449.2px;width:126px;height:22px;border:1px solid #e3e3e3;border-bottom:none;box-sizing:border-box;background:#f1f1f1"></div>
<span class="t" style="left:670.00px;top:453.00px;font-size:15.5px;transform:scaleX(0.8400);">Herstellerbarcodes</span>
<div style="left:786.8px;top:449.2px;width:166.2px;height:22px;border:1px solid #e3e3e3;border-bottom:none;box-sizing:border-box;background:#f1f1f1"></div>
<span class="t" style="left:795.00px;top:453.00px;font-size:15.5px;transform:scaleX(0.8930);">Best / Verf / Order / Auftr</span>
<div style="left:1096.8px;top:449.2px;width:103.5px;height:22px;border:1px solid #e3e3e3;border-bottom:none;box-sizing:border-box;background:#f1f1f1"></div>
<span class="t" style="left:1101.80px;top:453.00px;font-size:15.5px;transform:scaleX(0.8448);">Größen / Filiale</span>
<div style="left:1199.3px;top:449.2px;width:77.3px;height:22px;border:1px solid #e3e3e3;border-bottom:none;box-sizing:border-box;background:#f1f1f1"></div>
<span class="t" style="left:1207.50px;top:453.00px;font-size:15.5px;transform:scaleX(0.8289);">Lagerplatz</span>
<div style="left:14px;top:471px;width:1338.4px;height:453px;background:#f6f6f6;border:1px solid #e6e6e6;box-sizing:border-box"></div>
<div style="left:19px;top:473px;width:1331px;height:467.8px;background:#f0f0f0"></div>
<div style="left:951.8px;top:446.8px;width:146px;height:26px;background:#f6f6f6;border:1px solid #e3e3e3;border-bottom:none;box-sizing:border-box"></div>
<span class="t" style="left:961.30px;top:451.00px;font-size:15.5px;transform:scaleX(0.8534);">Best / Verk pro Filiale</span>
<svg class="a" style="left:950px;top:462px" width="160" height="26" viewBox="950 462 160 26"><path d="M963.600 478.600C985 478.400 1005 478.200 1024 476.300C1040 474.700 1050 472.200 1064 471.500C1075 471 1085 471.200 1092 471.200" fill="none" stroke="#e01a1e" stroke-width="7.400" stroke-linecap="round"/></svg>
<span class="t" style="left:48.00px;top:520.00px;font-size:15.5px;transform:scaleX(0.9103);font-weight:700;">Filiale</span>
<div class="hc" style="left:133.7px;top:519.6px;width:57.6px;height:36.2px;background:#b0e0e6"></div>
<div class="hc" style="left:192.45px;top:519.6px;width:57.6px;height:36.2px;background:#b0e0e6"></div>
<div class="hc" style="left:251.2px;top:519.6px;width:57.6px;height:36.2px;background:#b0e0e6"></div>
<div class="hc" style="left:309.95px;top:519.6px;width:57.6px;height:36.2px;background:#b0e0e6"></div>
<div class="hc" style="left:368.7px;top:519.6px;width:57.6px;height:36.2px;background:#b0e0e6"></div>
<div class="hc" style="left:427.45px;top:519.6px;width:57.6px;height:36.2px;background:#b0e0e6"></div>
<div class="hc" style="left:486.2px;top:519.6px;width:57.6px;height:36.2px;background:#b0e0e6"></div>
<div class="hc" style="left:544.95px;top:519.6px;width:57.6px;height:36.2px;background:#b0e0e6"></div>
<div class="hc" style="left:603.7px;top:519.6px;width:57.6px;height:36.2px;background:#b0e0e6"></div>
<div class="hc" style="left:662.45px;top:519.6px;width:57.6px;height:36.2px;background:#b0e0e6"></div>
<div class="hc" style="left:721.2px;top:519.6px;width:57.6px;height:36.2px;background:#b0e0e6"></div>
<div class="hc" style="left:779.95px;top:519.6px;width:57.6px;height:36.2px;background:#b0e0e6"></div>
<div class="hc" style="left:838.7px;top:519.6px;width:57.6px;height:36.2px;background:#b0e0e6"></div>
<div class="hc" style="left:897.45px;top:519.6px;width:57.6px;height:36.2px;background:#b0e0e6"></div>
<div class="hc" style="left:956.2px;top:519.6px;width:57.6px;height:36.2px;background:#b0e0e6"></div>
<div class="hc" style="left:1014.95px;top:519.6px;width:57.6px;height:36.2px;background:#b0e0e6"></div>
<span class="t" style="left:141.80px;top:531.00px;font-size:16px;transform:scaleX(0.9389);font-weight:700;">Ges.</span>
<span class="t" style="left:216.50px;top:531.00px;font-size:16px;transform:scaleX(0.8559);font-weight:700;">1</span>
<span class="t" style="left:274.60px;top:531.00px;font-size:16px;transform:scaleX(1.0586);font-weight:700;">2</span>
<span class="t" style="left:333.30px;top:531.00px;font-size:16px;transform:scaleX(1.0586);font-weight:700;">3</span>
<span class="t" style="left:392.10px;top:531.00px;font-size:16px;transform:scaleX(1.0586);font-weight:700;">4</span>
<span class="t" style="left:450.80px;top:531.00px;font-size:16px;transform:scaleX(1.0586);font-weight:700;">5</span>
<span class="t" style="left:509.60px;top:531.00px;font-size:16px;transform:scaleX(1.0586);font-weight:700;">6</span>
<span class="t" style="left:568.30px;top:531.00px;font-size:16px;transform:scaleX(1.0586);font-weight:700;">7</span>
<span class="t" style="left:627.10px;top:531.00px;font-size:16px;transform:scaleX(1.0586);font-weight:700;">8</span>
<span class="t" style="left:685.80px;top:531.00px;font-size:16px;transform:scaleX(1.0586);font-weight:700;">9</span>
<span class="t" style="left:738.60px;top:531.00px;font-size:16px;transform:scaleX(1.0023);font-weight:700;">72</span>
<div class="hc" style="left:1075px;top:519.6px;width:57.2px;height:36.2px;background:#f5deb3"></div>
<span class="t" style="left:1081.30px;top:530.00px;font-size:15.5px;transform:scaleX(0.7959);">Summe</span>
<div class="hc" style="left:24.3px;top:560px;width:104.4px;height:24.2px;background:#b0e0e6"></div>
<span class="t" style="left:29.50px;top:565.00px;font-size:15.5px;transform:scaleX(0.9207);font-weight:700;">Bestand</span>
<div class="in" style="left:135px;top:561px;width:55px;height:24px;"></div>
<div class="in" style="left:193.75px;top:561px;width:55px;height:24px;"></div>
<div class="in" style="left:252.5px;top:561px;width:55px;height:24px;"></div>
<div class="in" style="left:311.25px;top:561px;width:55px;height:24px;"></div>
<div class="in" style="left:370px;top:561px;width:55px;height:24px;"></div>
<div class="in" style="left:428.75px;top:561px;width:55px;height:24px;"></div>
<div class="in" style="left:487.5px;top:561px;width:55px;height:24px;"></div>
<div class="in" style="left:546.25px;top:561px;width:55px;height:24px;"></div>
<div class="in" style="left:605px;top:561px;width:55px;height:24px;"></div>
<div class="in" style="left:663.75px;top:561px;width:55px;height:24px;"></div>
<div class="in" style="left:722.5px;top:561px;width:55px;height:24px;"></div>
<div class="in" style="left:781.25px;top:561px;width:55px;height:24px;"></div>
<div class="in" style="left:840px;top:561px;width:55px;height:24px;"></div>
<div class="in" style="left:898.75px;top:561px;width:55px;height:24px;"></div>
<div class="in" style="left:957.5px;top:561px;width:55px;height:24px;"></div>
<div class="in" style="left:1016.25px;top:561px;width:55px;height:24px;"></div>
<div class="hc" style="left:1075px;top:560px;width:57.2px;height:24.2px;background:#f5deb3"></div>
<div class="hc" style="left:24.3px;top:585px;width:104.4px;height:24.2px;background:#b0e0e6"></div>
<span class="t" style="left:29.50px;top:590.00px;font-size:15.5px;transform:scaleX(0.9485);font-weight:700;">Verkauft</span>
<div class="in" style="left:135px;top:586px;width:55px;height:24px;"></div>
<div class="in" style="left:193.75px;top:586px;width:55px;height:24px;"></div>
<div class="in" style="left:252.5px;top:586px;width:55px;height:24px;"></div>
<div class="in" style="left:311.25px;top:586px;width:55px;height:24px;"></div>
<div class="in" style="left:370px;top:586px;width:55px;height:24px;"></div>
<div class="in" style="left:428.75px;top:586px;width:55px;height:24px;"></div>
<div class="in" style="left:487.5px;top:586px;width:55px;height:24px;"></div>
<div class="in" style="left:546.25px;top:586px;width:55px;height:24px;"></div>
<div class="in" style="left:605px;top:586px;width:55px;height:24px;"></div>
<div class="in" style="left:663.75px;top:586px;width:55px;height:24px;"></div>
<div class="in" style="left:722.5px;top:586px;width:55px;height:24px;"></div>
<div class="in" style="left:781.25px;top:586px;width:55px;height:24px;"></div>
<div class="in" style="left:840px;top:586px;width:55px;height:24px;"></div>
<div class="in" style="left:898.75px;top:586px;width:55px;height:24px;"></div>
<div class="in" style="left:957.5px;top:586px;width:55px;height:24px;"></div>
<div class="in" style="left:1016.25px;top:586px;width:55px;height:24px;"></div>
<div class="hc" style="left:1075px;top:585px;width:57.2px;height:24.2px;background:#f5deb3"></div>
<div class="hc" style="left:24.3px;top:610px;width:104.4px;height:24.2px;background:#b0e0e6"></div>
<span class="t" style="left:29.50px;top:615.00px;font-size:15.5px;transform:scaleX(0.9277);font-weight:700;">Reduziert</span>
<div class="in" style="left:135px;top:611px;width:55px;height:24px;"></div>
<div class="in" style="left:193.75px;top:611px;width:55px;height:24px;"></div>
<div class="in" style="left:252.5px;top:611px;width:55px;height:24px;"></div>
<div class="in" style="left:311.25px;top:611px;width:55px;height:24px;"></div>
<div class="in" style="left:370px;top:611px;width:55px;height:24px;"></div>
<div class="in" style="left:428.75px;top:611px;width:55px;height:24px;"></div>
<div class="in" style="left:487.5px;top:611px;width:55px;height:24px;"></div>
<div class="in" style="left:546.25px;top:611px;width:55px;height:24px;"></div>
<div class="in" style="left:605px;top:611px;width:55px;height:24px;"></div>
<div class="in" style="left:663.75px;top:611px;width:55px;height:24px;"></div>
<div class="in" style="left:722.5px;top:611px;width:55px;height:24px;"></div>
<div class="in" style="left:781.25px;top:611px;width:55px;height:24px;"></div>
<div class="in" style="left:840px;top:611px;width:55px;height:24px;"></div>
<div class="in" style="left:898.75px;top:611px;width:55px;height:24px;"></div>
<div class="in" style="left:957.5px;top:611px;width:55px;height:24px;"></div>
<div class="in" style="left:1016.25px;top:611px;width:55px;height:24px;"></div>
<div class="hc" style="left:1075px;top:610px;width:57.2px;height:24.2px;background:#f5deb3"></div>
<div class="hc" style="left:24.3px;top:635px;width:104.4px;height:24.2px;background:#b0e0e6"></div>
<span class="t" style="left:29.50px;top:640.00px;font-size:15.5px;transform:scaleX(0.9218);font-weight:700;">Soll-Bestand</span>
<div class="in" style="left:135px;top:636px;width:55px;height:24px;"></div>
<div class="in" style="left:193.75px;top:636px;width:55px;height:24px;"></div>
<div class="in" style="left:252.5px;top:636px;width:55px;height:24px;"></div>
<div class="in" style="left:311.25px;top:636px;width:55px;height:24px;"></div>
<div class="in" style="left:370px;top:636px;width:55px;height:24px;"></div>
<div class="in" style="left:428.75px;top:636px;width:55px;height:24px;"></div>
<div class="in" style="left:487.5px;top:636px;width:55px;height:24px;"></div>
<div class="in" style="left:546.25px;top:636px;width:55px;height:24px;"></div>
<div class="in" style="left:605px;top:636px;width:55px;height:24px;"></div>
<div class="in" style="left:663.75px;top:636px;width:55px;height:24px;"></div>
<div class="in" style="left:722.5px;top:636px;width:55px;height:24px;"></div>
<div class="in" style="left:781.25px;top:636px;width:55px;height:24px;"></div>
<div class="in" style="left:840px;top:636px;width:55px;height:24px;"></div>
<div class="in" style="left:898.75px;top:636px;width:55px;height:24px;"></div>
<div class="in" style="left:957.5px;top:636px;width:55px;height:24px;"></div>
<div class="in" style="left:1016.25px;top:636px;width:55px;height:24px;"></div>
<div class="hc" style="left:1075px;top:635px;width:57.2px;height:24.2px;background:#f5deb3"></div>
<div class="hc" style="left:24.3px;top:660px;width:104.4px;height:24.2px;background:#b0e0e6"></div>
<div class="in" style="left:135px;top:661px;width:55px;height:24px;"></div>
<div class="in" style="left:193.75px;top:661px;width:55px;height:24px;"></div>
<div class="in" style="left:252.5px;top:661px;width:55px;height:24px;"></div>
<div class="in" style="left:311.25px;top:661px;width:55px;height:24px;"></div>
<div class="in" style="left:370px;top:661px;width:55px;height:24px;"></div>
<div class="in" style="left:428.75px;top:661px;width:55px;height:24px;"></div>
<div class="in" style="left:487.5px;top:661px;width:55px;height:24px;"></div>
<div class="in" style="left:546.25px;top:661px;width:55px;height:24px;"></div>
<div class="in" style="left:605px;top:661px;width:55px;height:24px;"></div>
<div class="in" style="left:663.75px;top:661px;width:55px;height:24px;"></div>
<div class="in" style="left:722.5px;top:661px;width:55px;height:24px;"></div>
<div class="in" style="left:781.25px;top:661px;width:55px;height:24px;"></div>
<div class="in" style="left:840px;top:661px;width:55px;height:24px;"></div>
<div class="in" style="left:898.75px;top:661px;width:55px;height:24px;"></div>
<div class="in" style="left:957.5px;top:661px;width:55px;height:24px;"></div>
<div class="in" style="left:1016.25px;top:661px;width:55px;height:24px;"></div>
<div class="hc" style="left:1075px;top:660px;width:57.2px;height:24.2px;background:#f5deb3"></div>
<div class="hc" style="left:24.3px;top:685px;width:104.4px;height:24.2px;background:#b0e0e6"></div>
<div class="in" style="left:135px;top:686px;width:55px;height:24px;"></div>
<div class="in" style="left:193.75px;top:686px;width:55px;height:24px;"></div>
<div class="in" style="left:252.5px;top:686px;width:55px;height:24px;"></div>
<div class="in" style="left:311.25px;top:686px;width:55px;height:24px;"></div>
<div class="in" style="left:370px;top:686px;width:55px;height:24px;"></div>
<div class="in" style="left:428.75px;top:686px;width:55px;height:24px;"></div>
<div class="in" style="left:487.5px;top:686px;width:55px;height:24px;"></div>
<div class="in" style="left:546.25px;top:686px;width:55px;height:24px;"></div>
<div class="in" style="left:605px;top:686px;width:55px;height:24px;"></div>
<div class="in" style="left:663.75px;top:686px;width:55px;height:24px;"></div>
<div class="in" style="left:722.5px;top:686px;width:55px;height:24px;"></div>
<div class="in" style="left:781.25px;top:686px;width:55px;height:24px;"></div>
<div class="in" style="left:840px;top:686px;width:55px;height:24px;"></div>
<div class="in" style="left:898.75px;top:686px;width:55px;height:24px;"></div>
<div class="in" style="left:957.5px;top:686px;width:55px;height:24px;"></div>
<div class="in" style="left:1016.25px;top:686px;width:55px;height:24px;"></div>
<div class="hc" style="left:1075px;top:685px;width:57.2px;height:24.2px;background:#f5deb3"></div>
<div class="hc" style="left:24.3px;top:710px;width:104.4px;height:24.2px;background:#b0e0e6"></div>
<div class="in" style="left:135px;top:711px;width:55px;height:24px;"></div>
<div class="in" style="left:193.75px;top:711px;width:55px;height:24px;"></div>
<div class="in" style="left:252.5px;top:711px;width:55px;height:24px;"></div>
<div class="in" style="left:311.25px;top:711px;width:55px;height:24px;"></div>
<div class="in" style="left:370px;top:711px;width:55px;height:24px;"></div>
<div class="in" style="left:428.75px;top:711px;width:55px;height:24px;"></div>
<div class="in" style="left:487.5px;top:711px;width:55px;height:24px;"></div>
<div class="in" style="left:546.25px;top:711px;width:55px;height:24px;"></div>
<div class="in" style="left:605px;top:711px;width:55px;height:24px;"></div>
<div class="in" style="left:663.75px;top:711px;width:55px;height:24px;"></div>
<div class="in" style="left:722.5px;top:711px;width:55px;height:24px;"></div>
<div class="in" style="left:781.25px;top:711px;width:55px;height:24px;"></div>
<div class="in" style="left:840px;top:711px;width:55px;height:24px;"></div>
<div class="in" style="left:898.75px;top:711px;width:55px;height:24px;"></div>
<div class="in" style="left:957.5px;top:711px;width:55px;height:24px;"></div>
<div class="in" style="left:1016.25px;top:711px;width:55px;height:24px;"></div>
<div class="hc" style="left:1075px;top:710px;width:57.2px;height:24.2px;background:#f5deb3"></div>
<div class="hc" style="left:24.3px;top:735px;width:104.4px;height:24.2px;background:#b0e0e6"></div>
<div class="in" style="left:135px;top:736px;width:55px;height:24px;"></div>
<div class="in" style="left:193.75px;top:736px;width:55px;height:24px;"></div>
<div class="in" style="left:252.5px;top:736px;width:55px;height:24px;"></div>
<div class="in" style="left:311.25px;top:736px;width:55px;height:24px;"></div>
<div class="in" style="left:370px;top:736px;width:55px;height:24px;"></div>
<div class="in" style="left:428.75px;top:736px;width:55px;height:24px;"></div>
<div class="in" style="left:487.5px;top:736px;width:55px;height:24px;"></div>
<div class="in" style="left:546.25px;top:736px;width:55px;height:24px;"></div>
<div class="in" style="left:605px;top:736px;width:55px;height:24px;"></div>
<div class="in" style="left:663.75px;top:736px;width:55px;height:24px;"></div>
<div class="in" style="left:722.5px;top:736px;width:55px;height:24px;"></div>
<div class="in" style="left:781.25px;top:736px;width:55px;height:24px;"></div>
<div class="in" style="left:840px;top:736px;width:55px;height:24px;"></div>
<div class="in" style="left:898.75px;top:736px;width:55px;height:24px;"></div>
<div class="in" style="left:957.5px;top:736px;width:55px;height:24px;"></div>
<div class="in" style="left:1016.25px;top:736px;width:55px;height:24px;"></div>
<div class="hc" style="left:1075px;top:735px;width:57.2px;height:24.2px;background:#f5deb3"></div>
<div class="hc" style="left:24.3px;top:760px;width:104.4px;height:24.2px;background:#b0e0e6"></div>
<div class="in" style="left:135px;top:761px;width:55px;height:24px;"></div>
<div class="in" style="left:193.75px;top:761px;width:55px;height:24px;"></div>
<div class="in" style="left:252.5px;top:761px;width:55px;height:24px;"></div>
<div class="in" style="left:311.25px;top:761px;width:55px;height:24px;"></div>
<div class="in" style="left:370px;top:761px;width:55px;height:24px;"></div>
<div class="in" style="left:428.75px;top:761px;width:55px;height:24px;"></div>
<div class="in" style="left:487.5px;top:761px;width:55px;height:24px;"></div>
<div class="in" style="left:546.25px;top:761px;width:55px;height:24px;"></div>
<div class="in" style="left:605px;top:761px;width:55px;height:24px;"></div>
<div class="in" style="left:663.75px;top:761px;width:55px;height:24px;"></div>
<div class="in" style="left:722.5px;top:761px;width:55px;height:24px;"></div>
<div class="in" style="left:781.25px;top:761px;width:55px;height:24px;"></div>
<div class="in" style="left:840px;top:761px;width:55px;height:24px;"></div>
<div class="in" style="left:898.75px;top:761px;width:55px;height:24px;"></div>
<div class="in" style="left:957.5px;top:761px;width:55px;height:24px;"></div>
<div class="in" style="left:1016.25px;top:761px;width:55px;height:24px;"></div>
<div class="hc" style="left:1075px;top:760px;width:57.2px;height:24.2px;background:#f5deb3"></div>
<div class="hc" style="left:24.3px;top:785px;width:104.4px;height:24.2px;background:#b0e0e6"></div>
<div class="in" style="left:135px;top:786px;width:55px;height:24px;"></div>
<div class="in" style="left:193.75px;top:786px;width:55px;height:24px;"></div>
<div class="in" style="left:252.5px;top:786px;width:55px;height:24px;"></div>
<div class="in" style="left:311.25px;top:786px;width:55px;height:24px;"></div>
<div class="in" style="left:370px;top:786px;width:55px;height:24px;"></div>
<div class="in" style="left:428.75px;top:786px;width:55px;height:24px;"></div>
<div class="in" style="left:487.5px;top:786px;width:55px;height:24px;"></div>
<div class="in" style="left:546.25px;top:786px;width:55px;height:24px;"></div>
<div class="in" style="left:605px;top:786px;width:55px;height:24px;"></div>
<div class="in" style="left:663.75px;top:786px;width:55px;height:24px;"></div>
<div class="in" style="left:722.5px;top:786px;width:55px;height:24px;"></div>
<div class="in" style="left:781.25px;top:786px;width:55px;height:24px;"></div>
<div class="in" style="left:840px;top:786px;width:55px;height:24px;"></div>
<div class="in" style="left:898.75px;top:786px;width:55px;height:24px;"></div>
<div class="in" style="left:957.5px;top:786px;width:55px;height:24px;"></div>
<div class="in" style="left:1016.25px;top:786px;width:55px;height:24px;"></div>
<div class="hc" style="left:1075px;top:785px;width:57.2px;height:24.2px;background:#f5deb3"></div>
<div class="hc" style="left:24.3px;top:810px;width:104.4px;height:24.2px;background:#b0e0e6"></div>
<div class="in" style="left:135px;top:811px;width:55px;height:24px;"></div>
<div class="in" style="left:193.75px;top:811px;width:55px;height:24px;"></div>
<div class="in" style="left:252.5px;top:811px;width:55px;height:24px;"></div>
<div class="in" style="left:311.25px;top:811px;width:55px;height:24px;"></div>
<div class="in" style="left:370px;top:811px;width:55px;height:24px;"></div>
<div class="in" style="left:428.75px;top:811px;width:55px;height:24px;"></div>
<div class="in" style="left:487.5px;top:811px;width:55px;height:24px;"></div>
<div class="in" style="left:546.25px;top:811px;width:55px;height:24px;"></div>
<div class="in" style="left:605px;top:811px;width:55px;height:24px;"></div>
<div class="in" style="left:663.75px;top:811px;width:55px;height:24px;"></div>
<div class="in" style="left:722.5px;top:811px;width:55px;height:24px;"></div>
<div class="in" style="left:781.25px;top:811px;width:55px;height:24px;"></div>
<div class="in" style="left:840px;top:811px;width:55px;height:24px;"></div>
<div class="in" style="left:898.75px;top:811px;width:55px;height:24px;"></div>
<div class="in" style="left:957.5px;top:811px;width:55px;height:24px;"></div>
<div class="in" style="left:1016.25px;top:811px;width:55px;height:24px;"></div>
<div class="hc" style="left:1075px;top:810px;width:57.2px;height:24.2px;background:#f5deb3"></div>
<span class="t" style="left:165.80px;top:564.00px;font-size:15.5px;transform:scaleX(0.8190);">120</span>
<span class="t" style="left:224.30px;top:564.00px;font-size:15.5px;transform:scaleX(0.7997);">101</span>
<span class="t" style="left:290.80px;top:564.00px;font-size:15.5px;transform:scaleX(0.8253);">19</span>
<div class="hc" style="left:24.3px;top:837px;width:104.4px;height:25px;background:#f5deb3"></div>
<span class="t" style="left:53.80px;top:843.00px;font-size:15.5px;transform:scaleX(0.7959);">Summe</span>
<div class="hc" style="left:133.7px;top:837px;width:57.6px;height:25px;background:#f5deb3"></div>
<div class="hc" style="left:192.45px;top:837px;width:57.6px;height:25px;background:#f5deb3"></div>
<div class="hc" style="left:251.2px;top:837px;width:57.6px;height:25px;background:#f5deb3"></div>
<div class="hc" style="left:309.95px;top:837px;width:57.6px;height:25px;background:#f5deb3"></div>
<div class="hc" style="left:368.7px;top:837px;width:57.6px;height:25px;background:#f5deb3"></div>
<div class="hc" style="left:427.45px;top:837px;width:57.6px;height:25px;background:#f5deb3"></div>
<div class="hc" style="left:486.2px;top:837px;width:57.6px;height:25px;background:#f5deb3"></div>
<div class="hc" style="left:544.95px;top:837px;width:57.6px;height:25px;background:#f5deb3"></div>
<div class="hc" style="left:603.7px;top:837px;width:57.6px;height:25px;background:#f5deb3"></div>
<div class="hc" style="left:662.45px;top:837px;width:57.6px;height:25px;background:#f5deb3"></div>
<div class="hc" style="left:721.2px;top:837px;width:57.6px;height:25px;background:#f5deb3"></div>
<div class="hc" style="left:779.95px;top:837px;width:57.6px;height:25px;background:#f5deb3"></div>
<div class="hc" style="left:838.7px;top:837px;width:57.6px;height:25px;background:#f5deb3"></div>
<div class="hc" style="left:897.45px;top:837px;width:57.6px;height:25px;background:#f5deb3"></div>
<div class="hc" style="left:956.2px;top:837px;width:57.6px;height:25px;background:#f5deb3"></div>
<div class="hc" style="left:1014.95px;top:837px;width:57.6px;height:25px;background:#f5deb3"></div>
<div class="hc" style="left:1073.7px;top:837px;width:57.6px;height:25px;background:#f5deb3"></div>
<div style="left:23.8px;top:867px;width:1112.5px;height:1.2px;background:#f9f9f9"></div>
<div style="left:45px;top:876.6px;width:234.5px;height:1.2px;background:#8a8a8a"></div>
<div class="b" style="left:8.6px;top:998.4px;width:76.2px;height:25px;background:#fdfdfd;border:1px solid #d2d2d2;border-bottom-color:#bdbdbd;border-radius:4.500px"></div>
<span class="t" style="left:19.30px;top:1004.00px;font-size:15.5px;transform:scaleX(0.8186);">ESC Zurü</span>
<div class="b" style="left:89.85px;top:998.4px;width:76.2px;height:25px;background:#fdfdfd;border:1px solid #d2d2d2;border-bottom-color:#bdbdbd;border-radius:4.500px"></div>
<span class="t" style="left:106.80px;top:1004.00px;font-size:15.5px;transform:scaleX(0.8184);">F1 Hilfe</span>
<div class="b" style="left:171.1px;top:998.4px;width:76.2px;height:25px;background:#f5f5f5;border:1px solid #ececec;border-radius:4.500px"></div>
<span class="t" style="left:188.00px;top:1004.00px;font-size:15.5px;transform:scaleX(0.8241);color:#a3a3a3;">F2 Sich</span>
<div class="b" style="left:252.35px;top:998.4px;width:76.2px;height:25px;background:#f5f5f5;border:1px solid #ececec;border-radius:4.500px"></div>
<span class="t" style="left:272.50px;top:1004.00px;font-size:15.5px;transform:scaleX(0.8215);color:#a3a3a3;">F3 Sel</span>
<div class="b" style="left:333.6px;top:998.4px;width:76.2px;height:25px;background:#f5f5f5;border:1px solid #ececec;border-radius:4.500px"></div>
<span class="t" style="left:351.30px;top:1004.00px;font-size:15.5px;transform:scaleX(0.8104);color:#a3a3a3;">F4 Sort</span>
<div class="b" style="left:414.85px;top:998.4px;width:76.2px;height:25px;background:#fdfdfd;border:1px solid #d2d2d2;border-bottom-color:#bdbdbd;border-radius:4.500px"></div>
<span class="t" style="left:431.30px;top:1004.00px;font-size:15.5px;transform:scaleX(0.8360);">F5 Neu</span>
<div class="b" style="left:496.1px;top:998.4px;width:76.2px;height:25px;background:#fdfdfd;border:1px solid #d2d2d2;border-bottom-color:#bdbdbd;border-radius:4.500px"></div>
<span class="t" style="left:514.30px;top:1004.00px;font-size:15.5px;transform:scaleX(0.8142);">F6 Kop</span>
<div class="b" style="left:577.35px;top:998.4px;width:76.2px;height:25px;background:#fdfdfd;border:1px solid #d2d2d2;border-bottom-color:#bdbdbd;border-radius:4.500px"></div>
<span class="t" style="left:595.00px;top:1004.00px;font-size:15.5px;transform:scaleX(0.8262);">F7 Änd</span>
<div class="b" style="left:658.6px;top:998.4px;width:76.2px;height:25px;background:#fdfdfd;border:1px solid #d2d2d2;border-bottom-color:#bdbdbd;border-radius:4.500px"></div>
<span class="t" style="left:677.50px;top:1004.00px;font-size:15.5px;transform:scaleX(0.8194);">F8 Lös</span>
<div class="b" style="left:739.85px;top:998.4px;width:76.2px;height:25px;background:#fdfdfd;border:1px solid #d2d2d2;border-bottom-color:#bdbdbd;border-radius:4.500px"></div>
<span class="t" style="left:760.50px;top:1004.00px;font-size:15.5px;transform:scaleX(0.8006);">F9 Lst</span>
<div class="b" style="left:821.1px;top:998.4px;width:76.2px;height:25px;background:#fdfdfd;border:1px solid #d2d2d2;border-bottom-color:#bdbdbd;border-radius:4.500px"></div>
<span class="t" style="left:830.50px;top:1004.00px;font-size:15.5px;transform:scaleX(0.8421);">F10 Menü</span>
<div class="b" style="left:902.35px;top:998.4px;width:76.2px;height:25px;background:#fdfdfd;border:1px solid #d2d2d2;border-bottom-color:#bdbdbd;border-radius:4.500px"></div>
<span class="t" style="left:912.50px;top:1004.00px;font-size:15.5px;transform:scaleX(0.8715);">F11 Scan</span>
<div class="b" style="left:983.6px;top:998.4px;width:76.2px;height:25px;background:#fdfdfd;border:1px solid #d2d2d2;border-bottom-color:#bdbdbd;border-radius:4.500px"></div>
<span class="t" style="left:996.80px;top:1004.00px;font-size:15.5px;transform:scaleX(0.8400);">F12 Hist</span>
<div style="left:0px;top:1029.4px;width:1381px;height:1.6px;background:#dedede"></div>
<div style="left:1009px;top:1032px;width:1px;height:23px;background:#d4d4d4"></div>
<div style="left:1096.5px;top:1032px;width:1px;height:23px;background:#d4d4d4"></div>
<div style="left:1196.3px;top:1032px;width:1px;height:23px;background:#d4d4d4"></div>
<div style="left:1296.6px;top:1032px;width:1px;height:23px;background:#d4d4d4"></div>
<span class="t" style="left:1016.00px;top:1036.00px;font-size:15.5px;transform:scaleX(0.8873);">Auskunft</span>
<div style="left:1301.3px;top:1033.5px;width:57px;height:21.5px;background:#4682b4"></div>
<span class="t" style="left:1307.60px;top:1036.00px;font-size:15.5px;transform:scaleX(0.9089);color:#fff;">Fi. 2</span>
<svg class="a" style="left:1366px;top:1040px" width="14" height="15" viewBox="0 0 14 15"><g fill="#b5b5b5"><rect x="9" y="2" width="2" height="2"/><rect x="6" y="5.500" width="2" height="2"/><rect x="9" y="5.500" width="2" height="2"/><rect x="3" y="9" width="2" height="2"/><rect x="6" y="9" width="2" height="2"/><rect x="9" y="9" width="2" height="2"/></g></svg>
<svg class="a" style="left:1373px;top:0" width="8" height="8" viewBox="0 0 8 8"><path d="M8 0H0A8 8 0 0 1 8 8Z" fill="#b9bcc0"/></svg>
</body></html>
